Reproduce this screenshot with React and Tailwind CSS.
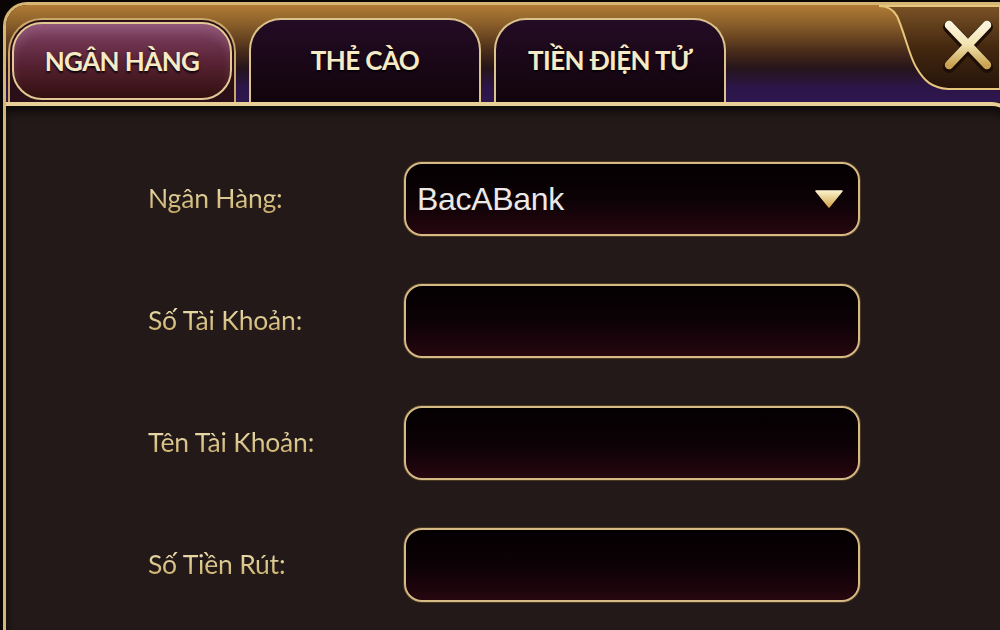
const tabs = [
  { label: "NGÂN HÀNG", active: true },
  { label: "THẺ CÀO" },
  { label: "TIỀN ĐIỆN TỬ" },
];

const fields = [
  { label: "Ngân Hàng:", value: "BacABank", select: true },
  { label: "Số Tài Khoản:" },
  { label: "Tên Tài Khoản:" },
  { label: "Số Tiền Rút:" },
];

function Tab({ label, active }) {
  const text = (
    <span className="font-['Lato',sans-serif] font-bold text-[26px] tracking-[-0.6px] text-[#f6ebc6] [text-shadow:0_2px_2px_rgba(0,0,0,0.85)]">
      {label}
    </span>
  );

  if (active) {
    return (
      <div className="w-[228px] h-[84px] rounded-t-[34px] border-2 border-b-0 border-[#c9a869] bg-[#2a0f18] p-[2px]">
        <div className="h-full rounded-[30px] border-2 border-[#e2c993] bg-linear-to-b from-[#84466a] via-[#5a2336] to-[#33100f] flex items-center justify-center shadow-[inset_0_8px_10px_rgba(255,220,240,0.12)]">
          {text}
        </div>
      </div>
    );
  }

  return (
    <div className="w-[232px] h-[84px] rounded-t-[32px] border-2 border-b-0 border-[#dcc38d] bg-linear-to-b from-[#230c25] to-[#12040b] flex items-center justify-center pb-[2px]">
      {text}
    </div>
  );
}

function CloseTab() {
  return (
    <svg width="124" height="86" viewBox="0 0 124 86" className="absolute right-0 top-0">
      <defs>
        <linearGradient id="closeBg" x1="0" y1="0" x2="0" y2="1">
          <stop offset="0" stopColor="#7a5226" />
          <stop offset="0.5" stopColor="#44280f" />
          <stop offset="1" stopColor="#26140b" />
        </linearGradient>
        <linearGradient id="closeX" x1="0" y1="0" x2="0" y2="1">
          <stop offset="0" stopColor="#fbf4dc" />
          <stop offset="0.5" stopColor="#f1e2ae" />
          <stop offset="1" stopColor="#c9a352" />
        </linearGradient>
      </defs>
      <path
        d="M3,1 C12,1 17,4 21,11 C29,29 33,50 40,62 C48,76 56,83 72,84 L124,84 L124,1 Z"
        fill="url(#closeBg)"
        stroke="#e6c57c"
        strokeWidth="2"
      />
      <g strokeLinecap="round">
        <path d="M73,22 L111,62 M111,22 L73,62" stroke="#1e0f06" strokeWidth="12" />
        <path d="M73,20 L111,60 M111,20 L73,60" stroke="url(#closeX)" strokeWidth="8.5" />
      </g>
    </svg>
  );
}

function Field({ label, value, select }) {
  return (
    <div className="flex items-center h-[74px]">
      <div className="w-[256px] font-['Lato',sans-serif] text-[26.5px] tracking-[-0.2px] bg-linear-to-b from-[#f2e9bf] to-[#c3a356] bg-clip-text text-transparent">
        {label}
      </div>
      <div className="w-[456px] h-full rounded-[18px] border-[2.5px] border-[#d6ba85] bg-linear-to-b from-[#040002] via-[#0c0206] to-[#26070f] shadow-[0_0_0_1px_#4a3720] flex items-center justify-between pl-[11px] pr-[13px]">
        {value && (
          <span className="font-['Liberation_Sans',Arial,sans-serif] text-[32px] tracking-[-0.3px] text-[#ece8e6]">
            {value}
          </span>
        )}
        {select && (
          <svg width="28" height="18" viewBox="0 0 28 18" className="mr-[2px]">
            <defs>
              <linearGradient id="tri" x1="0" y1="0" x2="0" y2="1">
                <stop offset="0" stopColor="#fbf1cc" />
                <stop offset="1" stopColor="#d4a64a" />
              </linearGradient>
            </defs>
            <path d="M1,1 L27,1 L14,17 Z" fill="url(#tri)" strokeLinejoin="round" stroke="url(#tri)" strokeWidth="1.5" />
          </svg>
        )}
      </div>
    </div>
  );
}

export default function App() {
  return (
    <div className="w-[1000px] h-[630px] overflow-hidden bg-[#0b0606]">
      <div className="h-full ml-[3px] mt-[2px] rounded-tl-[24px] border-l-[3px] border-t-[3px] border-[#d6b674] overflow-hidden flex flex-col bg-[#221918]">

        {/* Header with tabs */}
        <div className="relative h-[97px] shrink-0 bg-[linear-gradient(to_bottom,#b07c36_0%,#8a5e2a_20%,#4e301a_45%,#26141a_65%,#2c1548_85%,#2e174e_100%)] flex items-end gap-[13px] pl-[2px]">
          {tabs.map(t => (
            <Tab key={t.label} {...t} />
          ))}
          <CloseTab />
        </div>

        {/* Body */}
        <div className="flex-1 -mr-[14px] rounded-tr-[22px] border-t-[4px] border-r-[3px] border-[#e8cf95] bg-[#221918] shadow-[inset_0_6px_8px_rgba(0,0,0,0.6)] pt-[56px] pl-[142px] flex flex-col gap-[48px]">
          {fields.map(f => (
            <Field key={f.label} {...f} />
          ))}
        </div>
      </div>
    </div>
  );
}
